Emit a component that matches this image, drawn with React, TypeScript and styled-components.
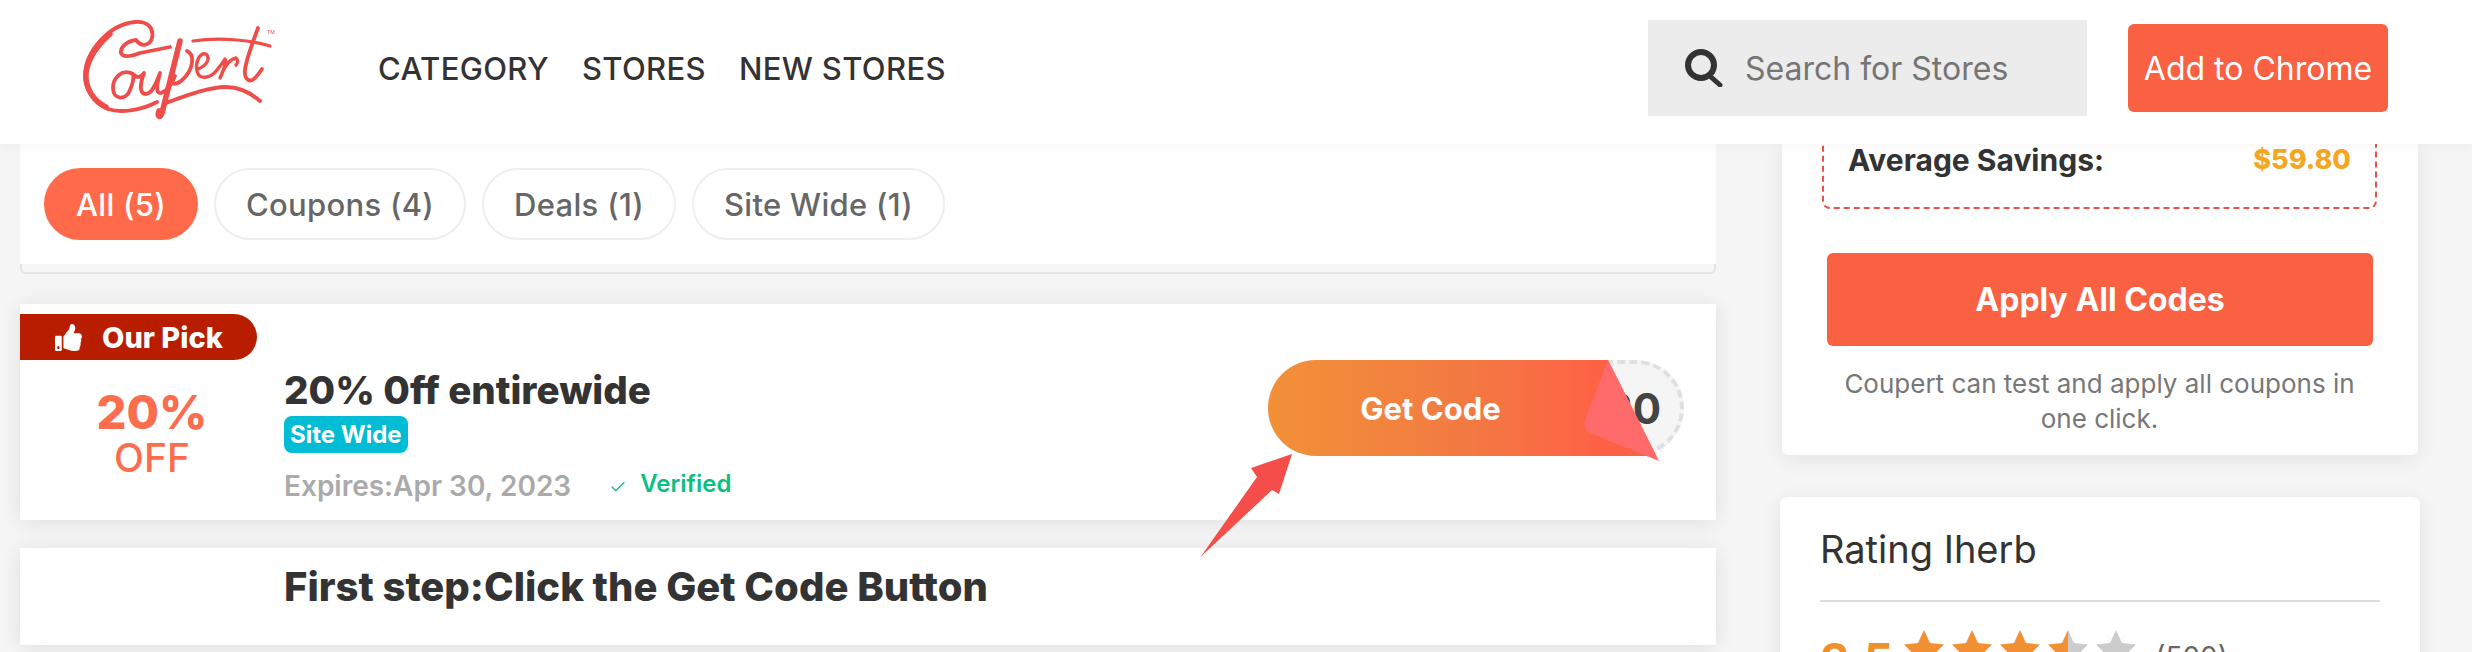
import * as React from 'react'
import styled, { createGlobalStyle } from 'styled-components'
import { FaThumbsUp } from 'react-icons/fa'
import { Check } from 'lucide-react'

const GlobalStyle = createGlobalStyle`
  html, body {
    margin: 0;
    padding: 0;
    background: #f5f5f5;
    font-family: Inter, "Liberation Sans", sans-serif;
    color: #333;
  }
  * {
    box-sizing: border-box;
  }
`

const Page = styled.div`
  width: 2472px;
  height: 652px;
  overflow: hidden;
  position: relative;
`

const Header = styled.header`
  position: relative;
  z-index: 2;
  height: 144px;
  padding: 0 84px 8px 80px;
  display: flex;
  align-items: center;
  background: #fff;
  box-shadow: 0 2px 10px #0000000a;
`

const LogoMark = styled.svg`
  width: 200px;
  height: 105px;
  flex-shrink: 0;
  filter: blur(0.6px);
`

const Nav = styled.nav`
  margin-left: 98px;
  display: flex;
  gap: 33px;
  font-size: 31px;
  letter-spacing: 0.35px;
  font-weight: 500;
  color: #333;
  white-space: nowrap;
`

const SearchBox = styled.div`
  margin-left: auto;
  width: 439px;
  height: 96px;
  padding-left: 37px;
  display: flex;
  align-items: center;
  gap: 22px;
  background: #ececec;
  font-size: 32px;
  color: #757575;
`

const ChromeButton = styled.button`
  margin-left: 41px;
  width: 260px;
  height: 88px;
  padding: 0;
  border: 0;
  border-radius: 6px;
  background: #fa6042;
  color: #fff;
  font-family: inherit;
  font-size: 32px;
`

const Main = styled.main`
  height: 508px;
  padding-left: 20px;
  display: flex;
  gap: 66px;
  overflow: hidden;
`

const LeftColumn = styled.div`
  width: 1696px;
  flex-shrink: 0;
  display: flex;
  flex-direction: column;
`

const FilterCard = styled.section`
  height: 120px;
  padding: 24px 24px 0;
  display: flex;
  gap: 16px;
  background: #fff;
`

const FilterRule = styled.div`
  height: 10px;
  background: #f7f7f7;
  border: 2px solid #e4e4e4;
  border-top: 0;
  border-radius: 0 0 6px 6px;
`

const Tab = styled.button<{ $active?: boolean }>`
  height: 72px;
  padding: 0 30px;
  border-radius: 36px;
  border: 2px solid ${(p) => (p.$active ? '#ff6b4a' : '#eeeeee')};
  background: ${(p) => (p.$active ? '#ff6b4a' : '#fff')};
  color: ${(p) => (p.$active ? '#fff' : '#666')};
  font-family: inherit;
  font-size: 31px;
  letter-spacing: 0.3px;
  font-weight: 500;
  white-space: nowrap;
`

const CouponCard = styled.article`
  position: relative;
  margin-top: 30px;
  height: 216px;
  display: flex;
  background: #fff;
  box-shadow: 0 2px 20px #00000017;
`

const Ribbon = styled.div`
  position: absolute;
  top: 10px;
  left: 0;
  width: 237px;
  height: 46px;
  padding-left: 35px;
  display: flex;
  align-items: center;
  gap: 20px;
  border-radius: 0 23px 23px 0;
  background: #b81d00;
  color: #fff;
  font-size: 29px;
  font-weight: 800;
  svg {
    width: 27px;
    height: 27px;
  }
`

const Discount = styled.div`
  width: 264px;
  flex-shrink: 0;
  padding-top: 82px;
  display: flex;
  flex-direction: column;
  align-items: center;
  color: #fc6d4d;
`

const DiscountValue = styled.div`
  font-size: 47px;
  line-height: 52px;
  font-weight: 800;
`

const DiscountLabel = styled.div`
  font-size: 39px;
  line-height: 40px;
  font-weight: 500;
`

const CouponBody = styled.div`
  flex: 1;
  padding-top: 63px;
  display: flex;
  flex-direction: column;
  align-items: flex-start;
`

const CouponTitle = styled.h3`
  margin: 0;
  font-size: 38.5px;
  line-height: 46px;
  font-weight: 800;
  color: #333;
`

const Badge = styled.span`
  margin-top: 3px;
  height: 37px;
  padding: 0 6px;
  display: flex;
  align-items: center;
  border-radius: 8px;
  background: #00bcd4;
  color: #fff;
  font-size: 24px;
  font-weight: 700;
`

const MetaRow = styled.div`
  margin-top: 16px;
  display: flex;
  align-items: center;
`

const Expires = styled.span`
  font-size: 28px;
  font-weight: 600;
  color: #aaa;
`

const Verified = styled.span`
  margin-left: 38px;
  display: flex;
  align-items: center;
  gap: 13px;
  font-size: 24px;
  font-weight: 600;
  color: #0dbf7f;
  position: relative;
  top: -3px;
  svg {
    position: relative;
    top: 4px;
  }
`

const CodeWidget = styled.div`
  position: relative;
  align-self: flex-start;
  margin: 56px 32px 0 0;
  width: 416px;
  height: 96px;
  display: flex;
  align-items: center;
  justify-content: flex-end;
  padding-right: 19px;
  border: 4px dashed #e0e0e0;
  border-radius: 48px;
  background: #f5f5f5;
  font-size: 42px;
  font-weight: 700;
  color: #444;
`

const GetCode = styled.button`
  position: absolute;
  top: -4px;
  left: -4px;
  width: 391px;
  height: 96px;
  padding: 0 66px 0 0;
  border: 0;
  border-radius: 48px 0 0 48px;
  clip-path: polygon(0 0, 340px 0, 388.5px 96px, 0 96px);
  background: linear-gradient(90deg, #f29138 0%, #f27a42 50%, #ff6145 85%, #f96244 100%);
  color: #fff;
  font-family: inherit;
  font-size: 31px;
  font-weight: 700;
`

const Fold = styled.svg`
  position: absolute;
  top: -4px;
  left: -4px;
  width: 392px;
  height: 102px;
  overflow: visible;
`

const Arrow = styled.svg`
  position: absolute;
  left: 1200px;
  top: 454px;
  width: 93px;
  height: 104px;
  z-index: 1;
`

const StepCard = styled.article`
  margin-top: 28px;
  height: 97px;
  padding: 16px 0 0 264px;
  background: #fff;
  box-shadow: 0 2px 20px #00000017;
`

const StepTitle = styled.h3`
  margin: 0;
  font-size: 40px;
  line-height: 46px;
  font-weight: 800;
  color: #333;
`

const Sidebar = styled.aside`
  width: 636px;
  flex-shrink: 0;
  display: flex;
  flex-direction: column;
`

const SummaryCard = styled.section`
  padding: 0 41px 19px 40px;
  border-radius: 0 0 6px 6px;
  background: #fff;
  box-shadow: 0 4px 20px #00000014;
`

const SavingsBox = styled.div`
  margin-top: -60px;
  padding: 56px 24px 29px;
  display: flex;
  justify-content: space-between;
  align-items: center;
  border: 2px dashed #e8514a;
  border-radius: 8px;
  font-size: 30px;
  line-height: 36px;
  font-weight: 700;
`

const SavingsAmount = styled.span`
  font-size: 27px;
  font-weight: 800;
  color: #f5a623;
`

const ApplyButton = styled.button`
  display: block;
  margin: 44px 4px 0 5px;
  width: 546px;
  height: 93px;
  border: 0;
  border-radius: 6px;
  background: #fa6042;
  color: #fff;
  font-family: inherit;
  font-size: 32px;
  font-weight: 700;
`

const ApplyNote = styled.p`
  margin: 20px 0 0;
  font-size: 26px;
  line-height: 35px;
  text-align: center;
  color: #777;
`

const RatingCard = styled.section`
  margin: 42px 0 0 -2px;
  width: 640px;
  padding: 28px 40px 0;
  border-radius: 8px;
  background: #fff;
  box-shadow: 0 4px 20px #00000014;
`

const RatingTitle = styled.h3`
  margin: 0;
  padding-bottom: 27px;
  border-bottom: 2px solid #dddddd;
  font-size: 38px;
  line-height: 48px;
  font-weight: 400;
  color: #333;
`

const RatingRow = styled.div`
  margin-top: 34px;
  display: flex;
  align-items: flex-start;
`

const Score = styled.span`
  font-size: 46px;
  line-height: 48px;
  font-weight: 700;
  color: #f0902a;
`

const Stars = styled.div`
  margin-left: 11px;
  margin-top: -6px;
  display: flex;
  gap: 8px;
`

const StarIcon = styled.svg`
  width: 40px;
  height: 38px;
`

const RatingCount = styled.span`
  margin-left: 19px;
  margin-top: 3px;
  font-size: 28px;
  line-height: 36px;
  color: #666;
`

const STAR = '20,0 26,13 40,14.5 30,24.5 32.5,38 20,31.5 7.5,38 10,24.5 0,14.5 14,13'

const Logo = () => (
  <LogoMark viewBox="0 0 200 105" aria-label="Coupert">
    <g fill="none" stroke="#ef4d4a" strokeWidth="3.8" strokeLinecap="round" strokeLinejoin="round">
      <path d="M77 86 C60 95 40 97 28 93 C13 87 5 72 5 60 C5 35 30 8 55 6 C68 5 74 12 72 22 C70 29 62 32 56 24 C46 25 40 32 41 37 C43 42 52 40 60 37 L90 31" />
      <path d="M30 18 C14 32 6 48 6 60 C6 72 13 85 26 91" strokeWidth="5.4" />
      <path d="M53 58 C42 52 33 62 33 72 C33 84 46 85 50 74 C53 67 54 62 53 58 C56 62 61 62 64 57 C60 68 59 78 66 78 C72 78 76 68 80 57 C77 68 75 78 81 77 C87 75 92 68 95 60" />
      <path d="M100 25 L82 97 C80 103 77 100 79 95" strokeWidth="5.6" />
      <path d="M107 35 C114 38 114 50 106 60 C101 66 95 70 90 66" />
      <path d="M113 25 C140 21 170 24 190 30" strokeWidth="3.2" />
      <path d="M118 53 C126 50 131 43 126 38 C120 36 115 46 117 55 C119 64 130 63 137 54 C141 49 144 45 145 43 C147 47 143 55 140 62 C144 52 148 44 156 42 C158 44 158 47 156 49" strokeWidth="3.4" />
      <path d="M178 12 C172 28 166 44 165 54 C164 64 170 67 175 62 C178 59 180 56 182 53" strokeWidth="3.8" />
      <path d="M86 87 C110 78 130 71 146 71 C160 71 172 78 180 85" strokeWidth="3.8" />
    </g>
    <text x="187" y="18" fontSize="5" fontFamily="Inter, sans-serif" fill="#ef4d4a">
      TM
    </text>
  </LogoMark>
)

const SearchIcon = () => (
  <svg width="38" height="38" viewBox="0 0 38 38" fill="none" stroke="#333" strokeLinecap="round">
    <circle cx="16" cy="16" r="13" strokeWidth="6" />
    <path d="M26 28 L35 36" strokeWidth="5" />
  </svg>
)

const Star = ({ kind }: { kind: 'on' | 'half' | 'off' }) => (
  <StarIcon viewBox="0 0 40 38">
    <defs>
      <linearGradient id="half-star">
        <stop offset="50%" stopColor="#f29133" />
        <stop offset="50%" stopColor="#cccccc" />
      </linearGradient>
    </defs>
    <polygon points={STAR} fill={kind === 'on' ? '#f29133' : kind === 'off' ? '#cccccc' : 'url(#half-star)'} />
  </StarIcon>
)

const tabs = ['All (5)', 'Coupons (4)', 'Deals (1)', 'Site Wide (1)']
const stars: Array<'on' | 'half' | 'off'> = ['on', 'on', 'on', 'half', 'off']

const App: React.FC = () => {
  return (
    <Page>
      <GlobalStyle />
      <Header>
        <Logo />
        <Nav>
          <span>CATEGORY</span>
          <span>STORES</span>
          <span>NEW STORES</span>
        </Nav>
        <SearchBox>
          <SearchIcon />
          <span>Search for Stores</span>
        </SearchBox>
        <ChromeButton>Add to Chrome</ChromeButton>
      </Header>
      <Main>
        <LeftColumn>
          <FilterCard>
            {tabs.map((tab, i) => (
              <Tab key={tab} $active={i === 0}>
                {tab}
              </Tab>
            ))}
          </FilterCard>
          <FilterRule />
          <CouponCard>
            <Ribbon>
              <FaThumbsUp />
              Our Pick
            </Ribbon>
            <Discount>
              <DiscountValue>20%</DiscountValue>
              <DiscountLabel>OFF</DiscountLabel>
            </Discount>
            <CouponBody>
              <CouponTitle>20% 0ff entirewide</CouponTitle>
              <Badge>Site Wide</Badge>
              <MetaRow>
                <Expires>Expires:Apr 30, 2023</Expires>
                <Verified>
                  <Check size={18} strokeWidth={1.6} />
                  Verified
                </Verified>
              </MetaRow>
            </CouponBody>
            <CodeWidget>
              20
              <GetCode>Get Code</GetCode>
              <Fold viewBox="0 0 392 102">
                <path d="M340 0 L317 60 Q314 69 322 73 L391 101 Z" fill="#ff6b6b" />
              </Fold>
            </CodeWidget>
          </CouponCard>
          <StepCard>
            <StepTitle>First step:Click the Get Code Button</StepTitle>
          </StepCard>
        </LeftColumn>
        <Sidebar>
          <SummaryCard>
            <SavingsBox>
              <span>Average Savings:</span>
              <SavingsAmount>$59.80</SavingsAmount>
            </SavingsBox>
            <ApplyButton>Apply All Codes</ApplyButton>
            <ApplyNote>
              Coupert can test and apply all coupons in
              <br />
              one click.
            </ApplyNote>
          </SummaryCard>
          <RatingCard>
            <RatingTitle>Rating Iherb</RatingTitle>
            <RatingRow>
              <Score>3.5</Score>
              <Stars>
                {stars.map((kind, i) => (
                  <Star key={i} kind={kind} />
                ))}
              </Stars>
              <RatingCount>(500)</RatingCount>
            </RatingRow>
          </RatingCard>
        </Sidebar>
      </Main>
      <Arrow viewBox="0 0 93 104">
        <polygon points="92,0 51,14 57,23 0.5,103 72,36 79,40" fill="#f44d4a" />
      </Arrow>
    </Page>
  )
}

export default App
